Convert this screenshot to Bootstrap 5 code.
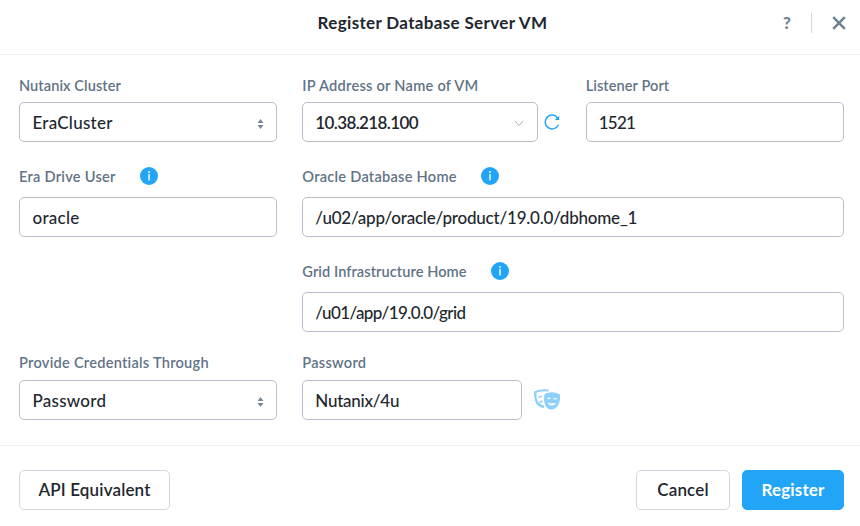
<!DOCTYPE html>
<html lang="en">
<head>
<meta charset="utf-8">
<meta name="viewport" content="width=device-width, initial-scale=1">
<title>Register Database Server VM</title>
<link href="https://cdn.jsdelivr.net/npm/bootstrap@5.3.0/dist/css/bootstrap.min.css" rel="stylesheet">
<style>
body{font-family:Lato,"Liberation Sans",sans-serif;font-size:17px;font-weight:500;color:#22272e;background:#fff;overflow:hidden}
.dlg-head{height:55px;border-bottom:1px solid #f0f1f3;padding:0 14px 8px 80px}
.dlg-title{font-size:17px;font-weight:700;letter-spacing:.34px;line-height:24px;padding-left:4px}
.dlg-tools{width:65px;color:#6f8194}
.dlg-tools .help{font-size:17px;font-weight:900;line-height:20px;padding-left:2px}
.dlg-tools .rule{width:1px;height:20px;background:#d3d7dc}
.dlg-tools button{color:inherit;line-height:0}
.dlg-body{padding:21px 16px 25px 19px}
.fields{--bs-gutter-x:25px;--bs-gutter-y:0}
.form-label{font-size:14.6px;font-weight:600;line-height:20px;color:#627386;letter-spacing:.06px;margin-bottom:6px;white-space:nowrap}
.label-wide{letter-spacing:.25px}
.field-info{margin-bottom:10px}
.field-info .form-label{margin:0}
.field-info svg{margin:-2px 0 0 24px}
.form-label.cred{margin-bottom:7px}
.form-control{height:40px;border:1px solid #b8bfca;border-radius:5px;padding:1px 12px 0 12.5px;font-size:17px;font-weight:500;line-height:24px;color:#22272e;background:#fff;letter-spacing:.25px}
.pick{display:flex;align-items:center;justify-content:space-between;text-align:left}
.pick svg{margin-top:2px}
.ip{width:236px;font-weight:600;letter-spacing:-.62px;padding-left:12px}
.port{letter-spacing:-.75px;padding-left:12px}
.path{letter-spacing:-.22px;padding-left:12px}
.path-short{letter-spacing:-.6px}
.secret{width:220px;letter-spacing:-.25px;padding-left:12px}
.row-mid{margin-top:25px}
.row-cred{margin-top:21px}
.dlg-foot{border-top:1px solid #f0f1f3;padding:24px 16px 16px 19px}
.dlg-foot .btn{height:40px;border-radius:5px;font-size:17px;font-weight:600;line-height:24px;padding:0;letter-spacing:.15px}
.btn-plain{border:1px solid #d3d8e0;color:#22272e;background:#fff}
.btn-api{width:151px}
.btn-cancel{width:94px;margin-right:12px}
.btn-go{width:102px;background:#22a5f7;border-color:#22a5f7;color:#fff}
.dlg-foot .btn-go{font-weight:700}
</style>
</head>
<body>
<svg width="0" height="0" class="position-absolute" aria-hidden="true">
  <symbol id="info" viewBox="0 0 18 18"><circle cx="9" cy="9" r="9" fill="#22a5f7"/><path d="M9 7V13.4" stroke="#fff" stroke-width="1.4"/><circle cx="9" cy="5" r=".95" fill="#fff"/></symbol>
  <symbol id="sort" viewBox="0 0 7 10"><path d="M3.5 0L6.5 4H.5zM3.5 10L6.5 6H.5z" fill="#75889c"/></symbol>
</svg>
<header class="dlg-head d-flex align-items-center">
  <h1 class="dlg-title flex-grow-1 text-center mb-0">Register Database Server VM</h1>
  <div class="dlg-tools d-flex align-items-center justify-content-between">
    <span class="help">?</span>
    <span class="rule"></span>
    <button class="border-0 bg-transparent p-0" aria-label="Close"><svg width="14" height="14" viewBox="0 0 14 14"><path d="M1.2 1.2L12.8 12.8M12.8 1.2L1.2 12.8" stroke="currentColor" stroke-width="2.5"/></svg></button>
  </div>
</header>
<main class="dlg-body">
  <div class="row fields">
    <div class="col-4">
      <label class="form-label d-block">Nutanix Cluster</label>
      <button class="form-control pick"><span>EraCluster</span><svg width="7" height="10"><use href="#sort"/></svg></button>
    </div>
    <div class="col-4">
      <label class="form-label label-wide d-block">IP Address or Name of VM</label>
      <div class="d-flex align-items-center">
        <button class="form-control pick ip flex-shrink-0"><span>10.38.218.100</span><svg width="11" height="7" viewBox="0 0 11 7"><path d="M1 .8L5 5.7L9 .8" fill="none" stroke="#a9b2bd"/></svg></button>
        <svg class="ms-1 flex-shrink-0" width="20" height="20" viewBox="0 0 20 20"><path d="M15.8 6.1A6.9 6.9 0 1 0 16.4 12.8" fill="none" stroke="#22a5f7" stroke-width="1.5"/><path d="M17.2 3.8V8H12.8z" fill="#22a5f7"/></svg>
      </div>
    </div>
    <div class="col-4">
      <label class="form-label d-block" for="port">Listener Port</label>
      <input class="form-control port" id="port" value="1521">
    </div>
  </div>
  <div class="row fields row-mid">
    <div class="col-4">
      <div class="field-info d-flex align-items-center"><label class="form-label label-wide" for="user">Era Drive User</label><svg width="18" height="18"><use href="#info"/></svg></div>
      <input class="form-control" id="user" value="oracle">
    </div>
    <div class="col-8">
      <div class="field-info d-flex align-items-center"><label class="form-label label-wide" for="dbhome">Oracle Database Home</label><svg width="18" height="18"><use href="#info"/></svg></div>
      <input class="form-control path" id="dbhome" value="/u02/app/oracle/product/19.0.0/dbhome_1">
    </div>
  </div>
  <div class="row fields row-mid">
    <div class="col-8 offset-4">
      <div class="field-info d-flex align-items-center"><label class="form-label" for="grid">Grid Infrastructure Home</label><svg width="18" height="18"><use href="#info"/></svg></div>
      <input class="form-control path path-short" id="grid" value="/u01/app/19.0.0/grid">
    </div>
  </div>
  <div class="row fields row-cred">
    <div class="col-4">
      <label class="form-label label-wide cred d-block">Provide Credentials Through</label>
      <button class="form-control pick"><span>Password</span><svg width="7" height="10"><use href="#sort"/></svg></button>
    </div>
    <div class="col-8">
      <label class="form-label label-wide cred d-block" for="secret">Password</label>
      <div class="d-flex align-items-center">
        <input class="form-control secret" id="secret" value="Nutanix/4u">
        <svg class="ms-2" width="34" height="22" viewBox="-4 0 34 22">
          <path d="M.6 3.4Q7 .4 14.5 1.6" fill="none" stroke="#8fd0fb" stroke-width="2"/>
          <path d="M1.2 2.8Q.9 9.5 3.2 14Q5.3 17 10.2 17.8" fill="none" stroke="#8fd0fb" stroke-width="2.2"/>
          <path d="M4.5 8.6L7.6 7.3M5.4 14Q6.5 12.1 8.6 12" fill="none" stroke="#8fd0fb" stroke-width="1.6"/>
          <path d="M10.6 5Q18 1.4 26 5.4Q26.5 13.5 23.2 17.6Q20.3 21 16.6 20.6Q12.6 19.7 11 15.7Q9.4 11.3 10.6 5z" fill="#8fd0fb"/>
          <path d="M13.4 9.9Q14.8 8.5 16.4 9.9M19.4 10.1Q21.2 8.8 22.6 10.4" fill="none" stroke="#fff" stroke-width="1.1"/>
          <path d="M13.3 13.5Q17.5 15.3 22.2 14.1Q20.6 16.8 17.2 16.4Q14.3 16 13.3 13.5z" fill="#fff"/>
        </svg>
      </div>
    </div>
  </div>
</main>
<footer class="dlg-foot d-flex">
  <button class="btn btn-plain btn-api me-auto">API Equivalent</button>
  <button class="btn btn-plain btn-cancel">Cancel</button>
  <button class="btn btn-go">Register</button>
</footer>
<script src="https://cdn.jsdelivr.net/npm/bootstrap@5.3.0/dist/js/bootstrap.bundle.min.js"></script>
</body>
</html>
